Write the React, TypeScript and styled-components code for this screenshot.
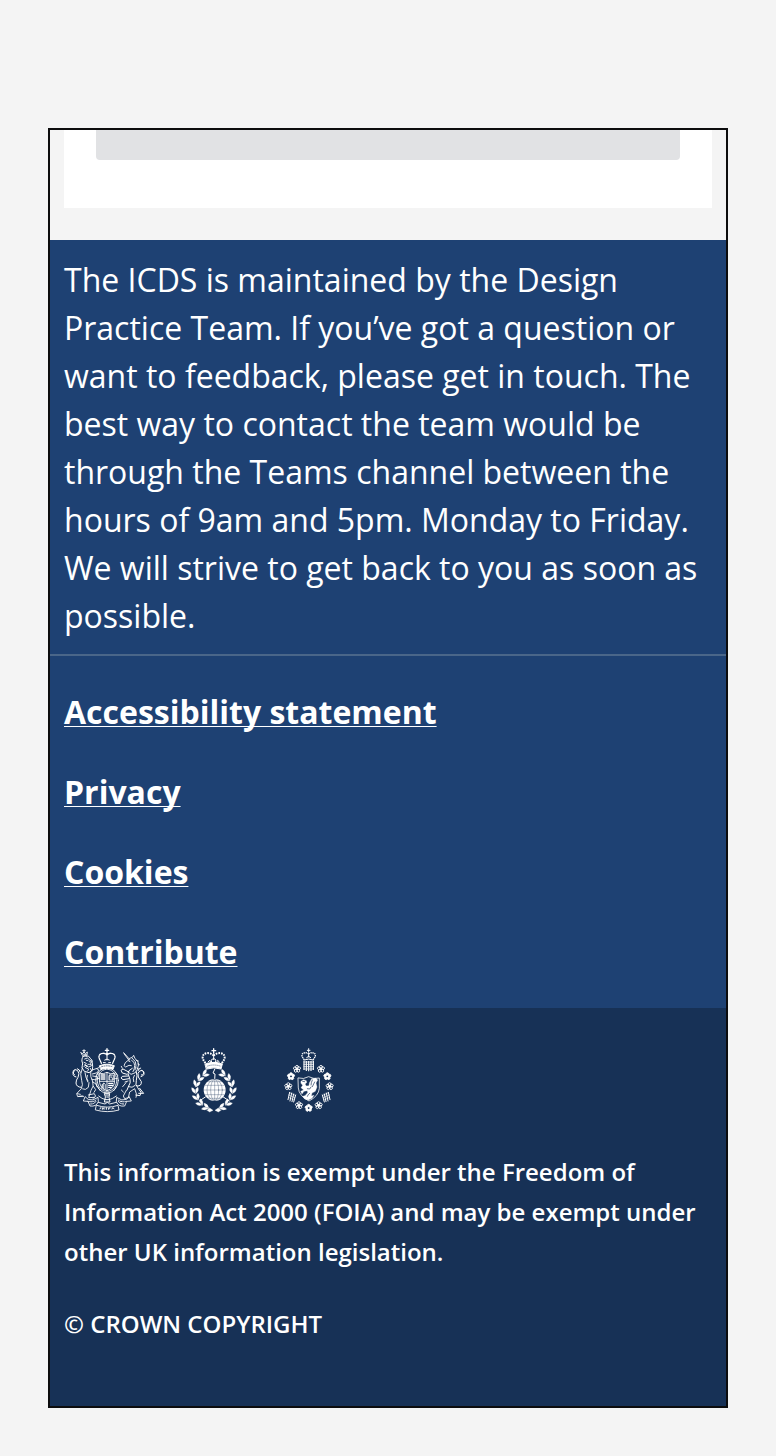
import React from "react";
import styled, { createGlobalStyle } from "styled-components";

const GlobalStyle = createGlobalStyle`
  *, *::before, *::after { box-sizing: border-box; }
  body {
    margin: 0;
    background: #f4f4f4;
    color: #fff;
    font-family: "Open Sans", "Liberation Sans", sans-serif;
  }
`;

const Page = styled.div`
  padding: 128px 48px 48px;
`;

const Frame = styled.div`
  border: 2px solid #0c0c0d;
`;

const Main = styled.main`
  padding: 0 14px 32px;
`;

const Card = styled.section`
  padding: 0 32px 48px;
  background: #fff;
`;

const Placeholder = styled.div`
  height: 30px;
  border-radius: 0 0 4px 4px;
  background: #e1e2e4;
`;

const Primary = styled.div`
  background: #1e4173;
`;

const Description = styled.p`
  margin: 0;
  padding: 16px 14px 14px;
  border-bottom: 2px solid #4a6689;
  font-size: 32px;
  line-height: 48px;
`;

const LinkList = styled.ul`
  display: flex;
  flex-direction: column;
  gap: 32px;
  margin: 0;
  padding: 32px 14px;
  list-style: none;
  font-size: 32px;
  line-height: 48px;
`;

const FooterLink = styled.a`
  color: #fff;
  font-weight: 700;
  text-decoration: underline;
  text-decoration-thickness: 1px;
  text-decoration-skip-ink: none;
  text-underline-offset: 2px;
`;

const Secondary = styled.div`
  display: flex;
  flex-direction: column;
  gap: 32px;
  padding: 32px 14px 62px;
  background: #173156;
`;

const Crests = styled.div`
  display: flex;
  gap: 32px;
`;

const Crest = styled.svg`
  display: block;
  height: 80px;
  fill: none;
  stroke: #fff;
  stroke-linecap: round;
  stroke-linejoin: round;
`;

const Legal = styled.p`
  margin: 0;
  font-size: 24px;
  line-height: 40px;
  font-weight: 600;
`;

const NAVY = "#173156";

function RoyalArms() {
  return (
    <Crest viewBox="-6 0 264 240" strokeWidth="2.6" role="img" aria-label="Royal coat of arms">
      <g strokeWidth="3">
        <path d="M123 26v11M118 31h10M123 44c-9-8-25-4-24 7 1 8 5 12 7 19M123 44c9-8 25-4 24 7-1 8-5 12-7 19" strokeWidth="4" strokeDasharray="4 3" />
        <path d="M123 42v18M116 60q7-6 14 0M112 68h6M128 68h6" />
        <path d="M101 77q22-9 44 0l-4 11q-18-7-36 0z" fill="#fff" />
        <path d="M107 80q16-5 32 0" stroke={NAVY} strokeWidth="2" strokeDasharray="3 4" />
        <circle cx="123" cy="42" r="3" fill="#fff" />
      </g>
      <ellipse cx="123" cy="121" rx="34" ry="38" />
      <ellipse cx="123" cy="121" rx="29" ry="33" strokeWidth="3" strokeDasharray="3 3" />
      <path d="M101 100q11 4 22-3 11 7 22 3v29q-2 15-22 23-20-8-22-23zM123 97v55M101 124h44" />
      <path d="M105 105h14M105 111h14M105 117h14M128 130h14M128 136h12M128 142h8" strokeWidth="4" strokeDasharray="5 2" />
      <path d="M129 119v-12l4-3 3 4-2 4 6 2v6M107 146l2-13q5-8 9 0v14M109 134v10M113 130v18M131 105h11v15h-11z" strokeWidth="2.2" />
      <path d="M97 98l-6 8M94 138l9 14M149 98l6 8M152 138l-9 14M92 116h8M146 116h8" />

      <g>
        <path d="M54 29v9M50 32h8M45 38l4 8q7-5 14-1l1-9-6 5-4-6-4 6zM50 49q7-4 13 0" />
        <path d="M51 50q-6 11-1 20l-2 13 7 11 14 4 10-7 1-12-2-18-10-12q-9-4-17 1z" strokeWidth="3" strokeDasharray="5 2" />
        <path d="M56 57l8-3 8 7 6 3-4 6 2 8-9 3-7-5-6 3M61 61l5 1M70 65l4 1M66 73h8M54 67l7 3-5 5 8 3-6 5 10 4-3 6M73 85l4 8" />
        <path d="M49 84q-9 19-2 37 5 13-1 25l-14 15 3 9 14-2M74 95q-2 16 6 29 5 15-5 27l-7 22 17-1M50 147q9 5 17-5l2-14M57 98q1 16 9 25M64 106q-5 12 1 20" />
        <path d="M76 91l17-6 5 5-4 8-15 4M94 88l3-6M80 108l13 2 4 5-5 5-14-2M79 125l11 7 3 8M82 139l7 10-5 8M67 165l18-4 4 8-8 6M38 169h15M34 161l9 2" />
        <path d="M45 142q-14-1-15-13 0-9 6-17 6-12-1-20-8-7-13 0-4 8 3 12M27 91q-7 3-6 12 3 8 9 8M34 86q8 2 9 11" strokeWidth="3" />
      </g>

      <g>
        <path d="M173 38l18 20M174 41l15 20" />
        <path d="M191 55l8-3 4-6 4 10q10 6 11 17l-4 15-6 10-13 5-8-7M191 57l-13 11-4 9 5 4 10-5 7 1" />
        <path d="M197 61q9 4 9 15t-5 19M188 63l4 2M199 55l9 10 2 12-3 13M211 61l6 2M215 72l5 2M212 84l6 3" />
        <path d="M199 85l-10 7-3 9 6 17q3 11-4 20l-5 12M211 95q4 12 0 26t4 22l10 14-3 10-13-2M188 96l-17-9-6 4 4 8 14 4M186 108l-17 1-4 5 6 5 18-3" strokeWidth="3" />
        <path d="M169 85l-3-6M177 126l9-3M181 151l-9 17 4 8 11-3 4-17 15-10 6 18-2 8M187 140q12 6 21-4M205 106q-6 8-2 19M170 140l10-12M166 150l6 6" />
        <path d="M214 138q13 1 12-13l-9-14q-4-13 4-18 9-5 12 3 2 8-7 9M228 91q8 3 6 12-3 6-9 7M216 92q2-7 8-8M221 145l11 14M218 160h14" strokeWidth="3" />
      </g>
      <path d="M57 171l-5 12 14 1 6 14q19 3 25-13l-1-13q-16 12-28 7zM190 171l6 12-14 1-6 14q-19 3-25-13l1-13q16 12 28 7z" />
      <path d="M66 184q15 4 24-4M74 192q11 0 16-8M181 184q-15 4-24-4M173 192q-11 0-16-8" strokeWidth="3" strokeDasharray="4 3" />
      <path d="M92 196q32 11 64 0l3 14q-35 10-70 0z" />
      <path d="M102 207l2-4M109 208v-5l5 5v-5M121 208v-5M128 208v-4h4M138 207l2-4 4 3" strokeWidth="3" />
      <path d="M116 160h15l-2 12 3 14h-17l3-14zM119 165h9M118 179h11M122 171h4" strokeWidth="3" />
      <path d="M98 168l10 7 8 3M151 168l-11 7-8 3M97 187l20 5 7-5 7 5 20-5" />
    </Crest>
  );
}

const leafAngles = [27, 48, 69, 90, 111, 132, 153];

function Laurel() {
  return (
    <>
      {[1, -1].map((side) =>
        leafAngles.map((angle) => (
          <g
            key={`${side}-${angle}`}
            transform={`translate(90 151) scale(${side} 1) rotate(${angle})`}
            fill="#fff"
            strokeWidth="1"
          >
            <path d="M9-56q-5-12-17-11 2 12 17 11z" />
            <path d="M9-54q-6 10-18 6 5-11 18-6z" />
          </g>
        )),
      )}
    </>
  );
}

function GlobeCrest() {
  return (
    <Crest viewBox="0 0 180 240" strokeWidth="3" role="img" aria-label="Crown and globe crest">
      <path d="M89 26v14M84 32h11" strokeWidth="4" />
      <path d="M89 47c-11-12-33-10-33 5 0 9 7 14 11 21M89 47c11-12 33-10 33 5 0 9-7 14-11 21" strokeWidth="6" strokeDasharray="5 3" strokeLinecap="butt" />
      <path d="M89 45v14M82 60l7-5 7 5-3 8h-8zM72 66l5-5 4 8M106 66l-5-5-4 8" strokeWidth="3" />
      <path d="M64 72q25-10 51 0l-4 15q-21-7-43 0z" fill="#fff" />
      <path d="M71 78q18-6 37 0" stroke={NAVY} strokeWidth="1.5" strokeDasharray="2 4" />
      <path d="M92 88l-5 11 6 3-1 17M64 171l-18 12M118 171l18 12" />
      <Laurel />
      <path d="M77 204l10 7-10 5-8-5zM103 204l-10 7 10 5 8-5z" fill="#fff" strokeWidth="1" />
      <circle cx="92" cy="150" r="33" fill="#fff" stroke="none" />
      <g stroke={NAVY} strokeWidth="1">
        <path d="M92 118v64M60 150h64M64 136h56M72 125h40M64 164h56M72 175h40" />
        <ellipse cx="92" cy="150" rx="12" ry="32" />
        <ellipse cx="92" cy="150" rx="23" ry="32" />
      </g>
    </Crest>
  );
}

const roses = [
  { x: 63, y: 87, solid: false },
  { x: 135, y: 87, solid: false },
  { x: 45, y: 109, solid: true },
  { x: 154, y: 109, solid: true },
  { x: 37, y: 139, solid: false },
  { x: 161, y: 139, solid: false },
  { x: 69, y: 196, solid: false },
  { x: 128, y: 196, solid: false },
  { x: 98, y: 204, solid: true },
];

function Rose({ x, y, solid }: { x: number; y: number; solid: boolean }) {
  return (
    <g transform={`translate(${x} ${y})`}>
      {[0, 72, 144, 216, 288].map((angle) => (
        <circle
          key={angle}
          cy="-7"
          r="4"
          transform={`rotate(${angle})`}
          fill={solid ? "#fff" : "none"}
          strokeWidth="2.4"
        />
      ))}
      <circle r={solid ? 2 : 4} fill={solid ? NAVY : "#fff"} stroke="none" />
    </g>
  );
}

function SecurityCrest() {
  return (
    <Crest viewBox="0 0 198 240" strokeWidth="2.5" role="img" aria-label="Crown, portcullis and dragon crest">
      <path d="M98 26v11M94 31h8" strokeWidth="3" />
      <path d="M98 42c-8-7-21-4-20 5 1 6 4 8 7 13M98 42c8-7 21-4 20 5-1 6-4 8-7 13" strokeWidth="4" strokeDasharray="4 2" strokeLinecap="butt" />
      <path d="M98 42v9M92 53l6-4 6 4M84 60q14-6 28 0" strokeWidth="3" />
      <g strokeWidth="2.2" strokeLinecap="butt">
        <path d="M83 66h31M83 73h31M83 80h31M83 87h31" />
        <path d="M84 63v27M91 63v30M98 63v31M105 63v30M112 63v27" strokeWidth="3.4" />
      </g>
      {roses.map((rose) => (
        <Rose key={`${rose.x}-${rose.y}`} {...rose} />
      ))}
      <path d="M41 158l17 8M38 165l18 8M37 172l17 8" strokeWidth="1.6" />
      <path d="M41 157l-5 22M47 159l-5 24M53 162l-5 23M59 165l-6 21" strokeWidth="3" />
      <path d="M157 158l-17 8M160 165l-18 8M161 172l-17 8" strokeWidth="1.6" />
      <path d="M157 157l5 22M151 159l5 24M145 162l5 23M139 165l6 21" strokeWidth="3" />
      <path d="M67 114q16 5 31-4 16 9 32 4v31q-2 23-31 38-30-15-32-38z" strokeWidth="2.4" />
      <path
        d="M75 124l7-5 9 3 1 6-5 4 4 6 8-1 1-8 7-13 12-2 6 6-5 9 3 12-5 13-10 5-2 9 8-2-6 9-11 5-11-3-6-8 7-2 8-9-1-6-10 2-6 8-4-8 9-4-8-7 5-7-5-6z"
        fill="#fff"
        strokeWidth="1"
      />
      <path d="M80 124l6 1M109 120q-4 8-4 15M116 126l-7 14M94 146l7 1 4-6M101 160q-6 4-7 9" stroke={NAVY} strokeWidth="2" />
    </Crest>
  );
}

const links = ["Accessibility statement", "Privacy", "Cookies", "Contribute"];

export default function App() {
  return (
    <>
      <GlobalStyle />
      <Page>
        <Frame>
          <Main>
            <Card>
              <Placeholder />
            </Card>
          </Main>
          <footer>
            <Primary>
              <Description>
                The ICDS is maintained by the Design Practice Team. If you’ve got a question or want
                to feedback, please get in touch. The best way to contact the team would be through
                the Teams channel between the hours of 9am and 5pm. Monday to Friday. We will strive
                to get back to you as soon as possible.
              </Description>
              <nav aria-label="Footer">
                <LinkList>
                  {links.map((label) => (
                    <li key={label}>
                      <FooterLink href="#">{label}</FooterLink>
                    </li>
                  ))}
                </LinkList>
              </nav>
            </Primary>
            <Secondary>
              <Crests>
                <RoyalArms />
                <GlobeCrest />
                <SecurityCrest />
              </Crests>
              <Legal>
                This information is exempt under the Freedom of Information Act 2000 (FOIA) and may
                be exempt under other UK information legislation.
              </Legal>
              <Legal>© CROWN COPYRIGHT</Legal>
            </Secondary>
          </footer>
        </Frame>
      </Page>
    </>
  );
}
